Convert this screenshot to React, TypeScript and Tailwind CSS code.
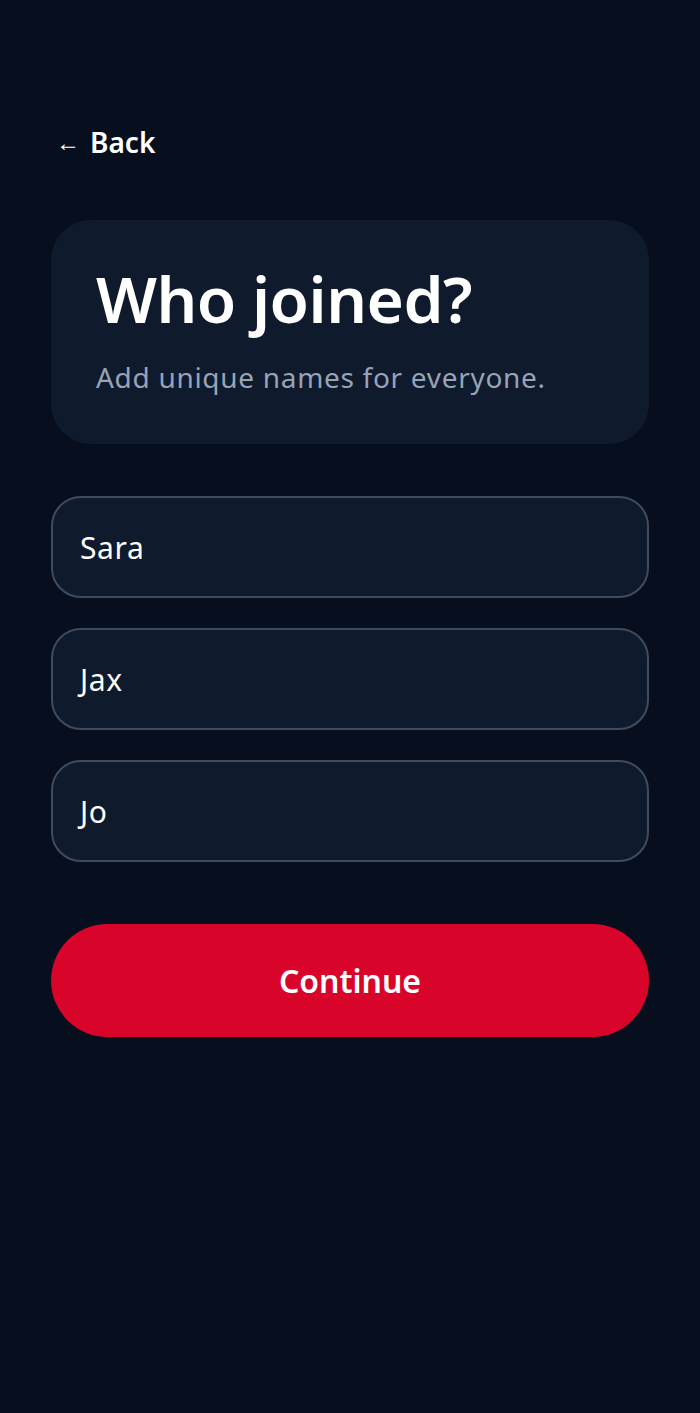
import React from "react";

export default function App() {
  const names = ["Sara", "Jax", "Jo"];
  return (
    <div
      className="min-h-[1413px] w-full bg-[#070f1e] px-[51px] pt-[124px] text-white"
      style={{ fontFamily: '"Noto Sans", "Open Sans", sans-serif' }}
    >
      <button className="flex items-center gap-[10px] pl-[5px] text-[28px] font-semibold leading-[36px] text-white">
        <span className="text-[24px]">←</span>
        <span>Back</span>
      </button>

      <div className="mt-[60px] rounded-[40px] bg-[#0f1a2d] px-[45px] pt-[39px] pb-[47px]">
        <h1 className="text-[64px] font-semibold leading-[80px] tracking-[-0.5px] text-white">
          Who joined?
        </h1>
        <p className="mt-[18px] text-[28px] leading-[40px] tracking-[0.7px] text-[#97a3b6]">
          Add unique names for everyone.
        </p>
      </div>

      <div className="mt-[52px] flex flex-col gap-[30px]">
        {names.map((n) => (
          <div
            key={n}
            className="flex h-[102px] items-center rounded-[30px] border-2 border-[#3f4b5e] bg-[#0f1a2d] px-[27px] text-[30px] tracking-[0.6px] text-white"
          >
            {n}
          </div>
        ))}
      </div>

      <button className="mt-[62px] flex h-[113px] w-full items-center justify-center rounded-full bg-[#d90429] text-[32px] font-semibold text-white">
        Continue
      </button>
    </div>
  );
}
